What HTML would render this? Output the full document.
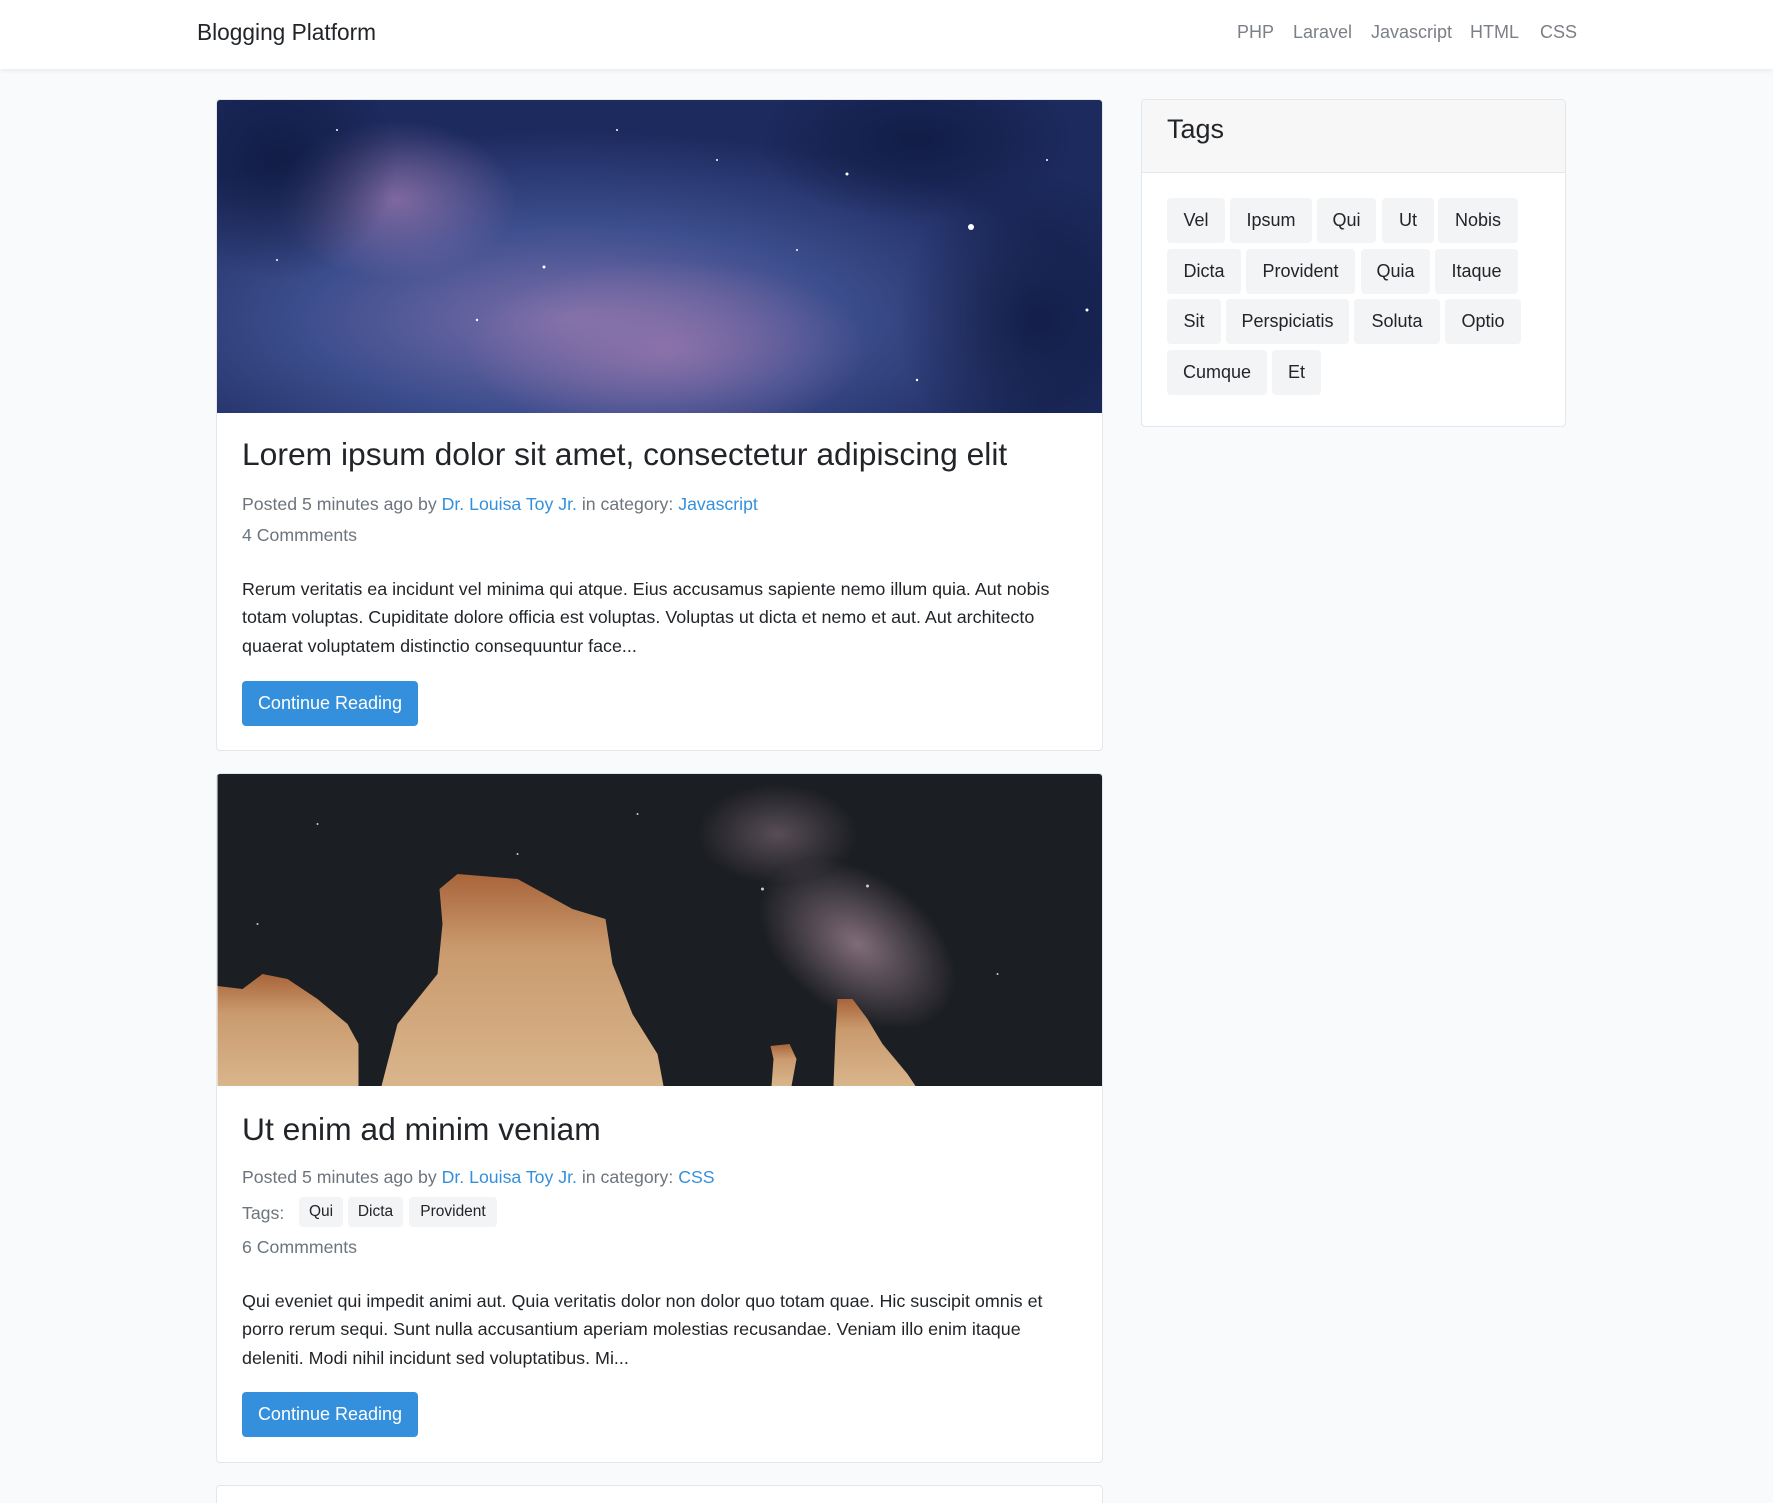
<!DOCTYPE html>
<html><head><meta charset="utf-8"><style>
*{box-sizing:border-box;margin:0;padding:0}
html,body{width:1773px;height:1503px;overflow:hidden}
body{background:#f8fafc;font-family:"Liberation Sans",sans-serif;color:#212529;position:relative}
.nav{position:absolute;left:0;top:0;width:1773px;height:69px;background:#fff;box-shadow:0 2px 4px rgba(0,0,0,.06)}
.brand{position:absolute;left:197px;top:19px;font-size:22.7px;color:#212529}
.links{position:absolute;top:22px;font-size:18px;color:#7b8087}
.card{position:absolute;background:#fff;border:1px solid #e3e6ea;border-radius:4px;overflow:hidden}
.abs{position:absolute;white-space:nowrap}
h2{font-weight:normal;font-size:31.8px;color:#212529}
.meta{font-size:17.7px;color:#6c757d}
.meta a{color:#3490dc;text-decoration:none}
.txt{font-size:17.9px;line-height:28.3px;color:#212529}
.btn{position:absolute;width:176px;height:45px;background:#3490dc;border-radius:4px;color:#fff;font-size:18px;line-height:45px;text-align:center}
.tag{position:absolute;height:45px;background:#f3f4f6;border-radius:4px;font-size:18px;line-height:45px;text-align:center;color:#212529}
.stag{position:absolute;height:30px;top:1197px;background:#f3f4f6;border-radius:4px;font-size:15.5px;line-height:30px;text-align:center;color:#212529}
</style></head><body>
<div class="nav"><div class="brand">Blogging Platform</div>
<span class="links" style="left:1237px">PHP</span>
<span class="links" style="left:1293px">Laravel</span>
<span class="links" style="left:1371px">Javascript</span>
<span class="links" style="left:1470px">HTML</span>
<span class="links" style="left:1540px">CSS</span></div>

<div class="card" style="left:216px;top:99px;width:887px;height:652px">
<svg width="887" height="313" style="display:block">
<defs>
<radialGradient id="a" cx="0.4" cy="0.7" r="0.6"><stop offset="0" stop-color="#7a6ea8"/><stop offset="0.5" stop-color="#3d4e8e"/><stop offset="1" stop-color="#1c2a5e"/></radialGradient>
<radialGradient id="b" cx="0.5" cy="0.5" r="0.5"><stop offset="0" stop-color="#a07ab0" stop-opacity=".7"/><stop offset="1" stop-color="#a07ab0" stop-opacity="0"/></radialGradient>
<radialGradient id="c" cx="0.5" cy="0.5" r="0.5"><stop offset="0" stop-color="#0f1a40" stop-opacity=".8"/><stop offset="1" stop-color="#0f1a40" stop-opacity="0"/></radialGradient>
</defs>
<rect width="887" height="313" fill="url(#a)"/>
<ellipse cx="180" cy="100" rx="120" ry="80" fill="url(#b)"/>
<ellipse cx="450" cy="250" rx="200" ry="90" fill="url(#b)"/>
<ellipse cx="60" cy="60" rx="120" ry="120" fill="url(#c)"/>
<ellipse cx="820" cy="220" rx="140" ry="150" fill="url(#c)"/>
<ellipse cx="700" cy="40" rx="160" ry="80" fill="url(#c)"/>
<g fill="#fff"><circle cx="754" cy="127" r="3"/><circle cx="630" cy="74" r="1.5"/><circle cx="327" cy="167" r="1.5"/><circle cx="870" cy="210" r="1.5"/><circle cx="120" cy="30" r="1"/><circle cx="500" cy="60" r="1"/><circle cx="260" cy="220" r="1.2"/><circle cx="580" cy="150" r="1"/><circle cx="400" cy="30" r="1"/><circle cx="830" cy="60" r="1"/><circle cx="60" cy="160" r="1"/><circle cx="700" cy="280" r="1.2"/></g>
</svg>
<h2 class="abs" style="left:25px;top:336px">Lorem ipsum dolor sit amet, consectetur adipiscing elit</h2>
<div class="abs meta" style="left:25px;top:394px">Posted 5 minutes ago by <a>Dr. Louisa Toy Jr.</a> in category: <a>Javascript</a></div>
<div class="abs meta" style="left:25px;top:425px">4 Commments</div>
<div class="abs txt" style="left:25px;top:475px">Rerum veritatis ea incidunt vel minima qui atque. Eius accusamus sapiente nemo illum quia. Aut nobis<br>totam voluptas. Cupiditate dolore officia est voluptas. Voluptas ut dicta et nemo et aut. Aut architecto<br>quaerat voluptatem distinctio consequuntur face...</div>
<div class="btn" style="left:25px;top:581px">Continue Reading</div>
</div>

<div class="card" style="left:216px;top:773px;width:887px;height:690px">
<svg width="887" height="312" viewBox="0 0 886 312" style="display:block">
<defs>
<radialGradient id="m" cx="0.5" cy="0.5" r="0.5"><stop offset="0" stop-color="#9a8090" stop-opacity=".8"/><stop offset="1" stop-color="#9a8090" stop-opacity="0"/></radialGradient>
<linearGradient id="r" x1="0" y1="0" x2="0" y2="1"><stop offset="0" stop-color="#a9643a"/><stop offset=".35" stop-color="#c99a6e"/><stop offset="1" stop-color="#d9b58c"/></linearGradient>
</defs>
<rect width="886" height="312" fill="#1b1e22"/>
<ellipse cx="640" cy="170" rx="110" ry="70" fill="url(#m)" transform="rotate(35 640 170)"/>
<ellipse cx="560" cy="60" rx="80" ry="50" fill="url(#m)" opacity=".6"/>
<g fill="#ccc"><circle cx="545" cy="115" r="1.5"/><circle cx="650" cy="112" r="1.5"/><circle cx="100" cy="50" r="1"/><circle cx="300" cy="80" r="1"/><circle cx="780" cy="200" r="1"/><circle cx="40" cy="150" r="1"/><circle cx="420" cy="40" r="1"/></g>
<path d="M0 212 L25 215 L45 200 L70 205 L100 225 L130 250 L141 270 L141 312 L0 312Z" fill="url(#r)"/>
<path d="M164 312 L180 250 L220 200 L225 150 L222 115 L240 100 L300 105 L355 135 L388 145 L395 190 L415 240 L440 280 L446 312Z" fill="url(#r)"/>
<path d="M554 312 L556 285 L553 272 L572 270 L579 285 L574 312Z" fill="url(#r)"/>
<path d="M616 312 L618 260 L620 225 L635 225 L650 245 L665 270 L690 300 L698 312Z" fill="url(#r)"/>
</svg>
<h2 class="abs" style="left:25px;top:337px">Ut enim ad minim veniam</h2>
<div class="abs meta" style="left:25px;top:393px">Posted 5 minutes ago by <a>Dr. Louisa Toy Jr.</a> in category: <a>CSS</a></div>
<div class="abs meta" style="left:25px;top:429px">Tags:</div>
<div class="abs txt" style="left:25px;top:513px">Qui eveniet qui impedit animi aut. Quia veritatis dolor non dolor quo totam quae. Hic suscipit omnis et<br>porro rerum sequi. Sunt nulla accusantium aperiam molestias recusandae. Veniam illo enim itaque<br>deleniti. Modi nihil incidunt sed voluptatibus. Mi...</div>
<div class="abs meta" style="left:25px;top:463px">6 Commments</div>
<div class="btn" style="left:25px;top:618px">Continue Reading</div>
</div>
<div class="stag" style="left:299px;width:44px">Qui</div>
<div class="stag" style="left:348px;width:55px">Dicta</div>
<div class="stag" style="left:409px;width:88px">Provident</div>

<div class="card" style="left:216px;top:1485px;width:887px;height:80px"></div>

<div class="card" style="left:1141px;top:99px;width:425px;height:328px">
<div style="height:73px;background:#f7f7f7;border-bottom:1px solid #e3e6ea"></div>
<div class="abs" style="left:25px;top:14px;font-size:27px">Tags</div>
</div>
<div class="tag" style="left:1167px;top:198px;width:58px">Vel</div>
<div class="tag" style="left:1230px;top:198px;width:82px">Ipsum</div>
<div class="tag" style="left:1317px;top:198px;width:59px">Qui</div>
<div class="tag" style="left:1382px;top:198px;width:52px">Ut</div>
<div class="tag" style="left:1438px;top:198px;width:80px">Nobis</div>
<div class="tag" style="left:1167px;top:249px;width:74px">Dicta</div>
<div class="tag" style="left:1246px;top:249px;width:109px">Provident</div>
<div class="tag" style="left:1361px;top:249px;width:69px">Quia</div>
<div class="tag" style="left:1435px;top:249px;width:83px">Itaque</div>
<div class="tag" style="left:1167px;top:299px;width:54px">Sit</div>
<div class="tag" style="left:1226px;top:299px;width:123px">Perspiciatis</div>
<div class="tag" style="left:1354px;top:299px;width:86px">Soluta</div>
<div class="tag" style="left:1445px;top:299px;width:76px">Optio</div>
<div class="tag" style="left:1167px;top:350px;width:100px">Cumque</div>
<div class="tag" style="left:1272px;top:350px;width:49px">Et</div>
</body></html>
